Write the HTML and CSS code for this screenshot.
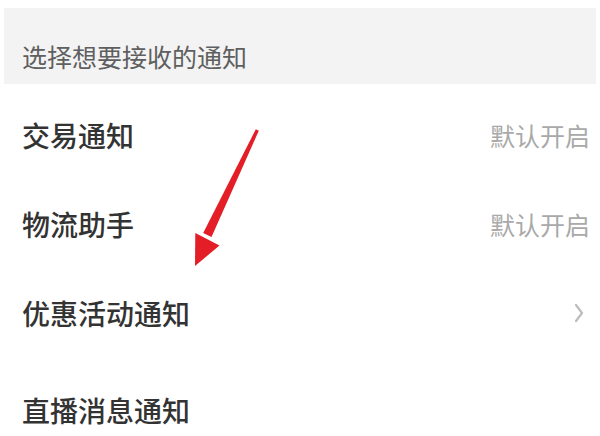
FILE: index.html
```html
<!DOCTYPE html>
<html lang="zh-CN">
<head>
<meta charset="utf-8">
<link rel="stylesheet" href="styles.css">
</head>
<body>
<div class="page">
  <div class="section-head">选择想要接收的通知</div>
  <div class="list">
    <div class="row"><span class="label">交易通知</span><span class="value">默认开启</span></div>
    <div class="row"><span class="label">物流助手</span><span class="value">默认开启</span></div>
    <div class="row"><span class="label">优惠活动通知</span>
      <svg class="chevron" width="10" height="20" viewBox="0 0 10 20"><polyline points="2,2 8,10 2,18" fill="none" stroke="#bdbdbd" stroke-width="2.2" stroke-linecap="round" stroke-linejoin="round"/></svg>
    </div>
    <div class="row row-last"><span class="label">直播消息通知</span></div>
  </div>
  <svg class="arrow" width="600" height="436" viewBox="0 0 600 436">
    <polygon points="255.8,129.3 258.8,130.7 211.5,237 203.2,233" fill="#e41e26"/>
    <polygon points="195,266 195.3,233 219.5,245.5" fill="#e41e26"/>
  </svg>
</div>
</body>
</html>
```

FILE: styles.css
```css
html, body {
  margin: 0;
  padding: 0;
  background: #ffffff;
}
.page {
  position: relative;
  width: 600px;
  height: 436px;
  overflow: hidden;
  font-family: "Noto Sans CJK SC", "Noto Sans", sans-serif;
}
.section-head {
  margin: 8px 4px 0 4px;
  padding: 30px 0 10px 18px;
  height: 36px;
  line-height: 36px;
  background: #f3f3f3;
  color: #5f5f5f;
  font-size: 25px;
}
.list {
  padding-top: 6px;
}
.row {
  height: 89px;
  display: flex;
  align-items: center;
  justify-content: space-between;
  padding: 0 10px 0 22px;
}
.row-last {
  margin-top: 8px;
}
.label {
  font-size: 28px;
  font-weight: 500;
  color: #333333;
}
.value {
  font-size: 25px;
  color: #a9a9a9;
}
.chevron {
  margin-right: 6px;
}
.arrow {
  position: absolute;
  left: 0;
  top: 0;
  pointer-events: none;
}
```
